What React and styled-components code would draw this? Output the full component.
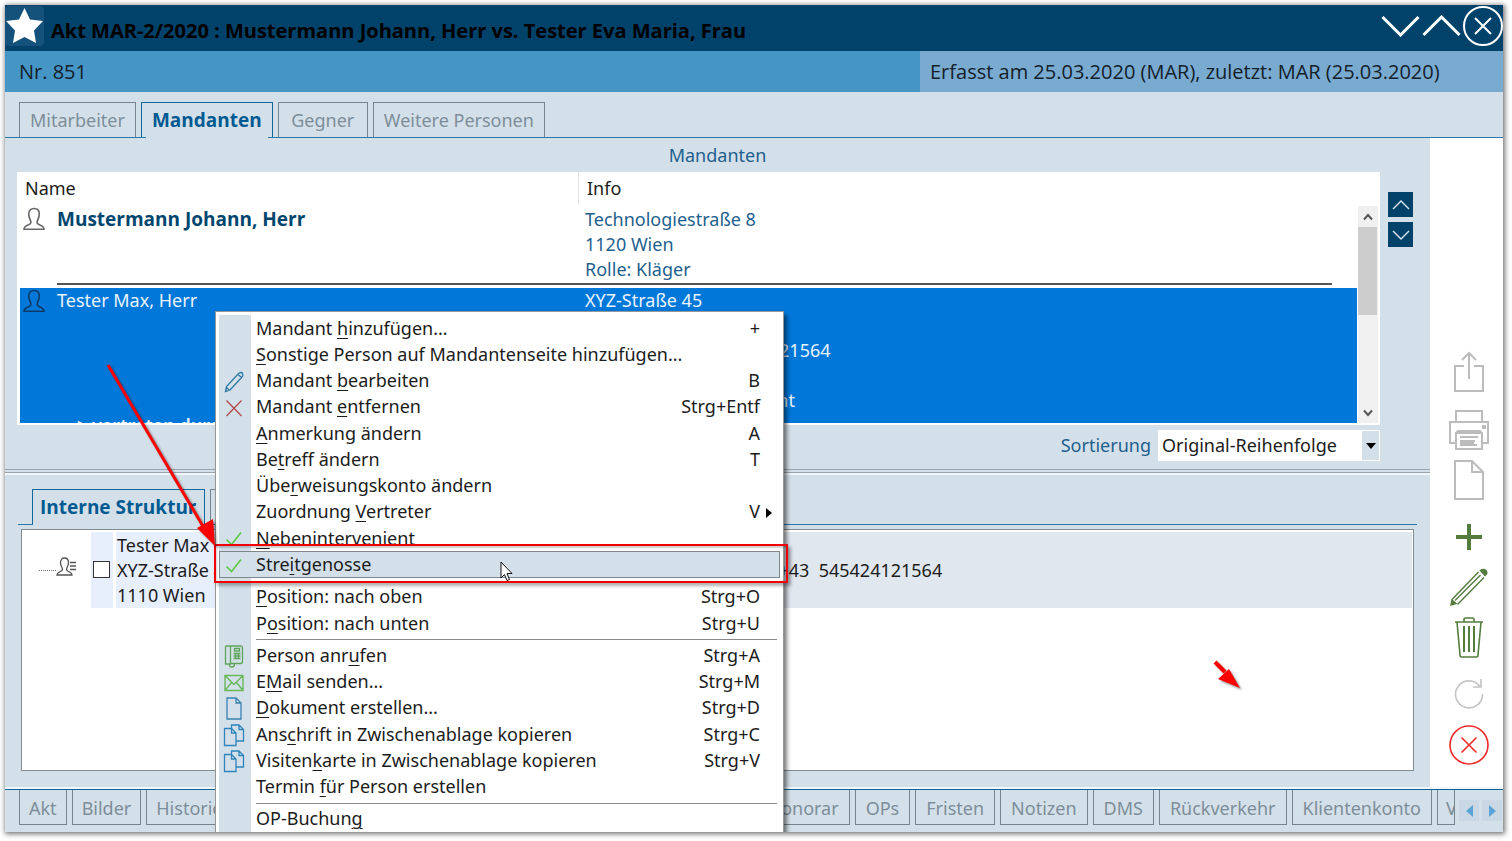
import React from 'react';
import styled, { createGlobalStyle, css } from 'styled-components';

const GlobalStyle = createGlobalStyle`
    * {
        box-sizing: border-box;
    }
    body {
        margin: 0;
        background: #fff;
        color: #1c1c1c;
        font-family: 'Noto Sans', 'Open Sans', sans-serif;
        font-size: 18px;
        line-height: 25px;
    }
    button, select, input {
        margin: 0;
        font: inherit;
        color: inherit;
    }
    button {
        padding: 0;
        border: 0;
        background: none;
    }
`;

const Page = styled.div`
    position: relative;
    display: flex;
    height: 100vh;
    padding: 5px 9px 9px 5px;
    overflow: hidden;
`;
const Window = styled.main`
    position: relative;
    display: flex;
    flex: 1;
    flex-direction: column;
    min-width: 0;
    background: #d4e0e9;
    box-shadow: 1px 1px 5px 1px rgba(0, 0, 0, 0.55);
    overflow: hidden;
`;

/* title bar */
const TitleBar = styled.header`
    display: flex;
    align-items: center;
    height: 46px;
    background: #004269;
`;
const StarButton = styled.button`
    display: flex;
    width: 39px;
    height: 40px;
    margin-right: 7px;
    margin-bottom: 4px;
    border-radius: 4px;
    background: #14527c;
`;
const Title = styled.h1`
    flex: 1;
    margin: 0;
    padding-top: 4px;
    color: #000;
    font-family: 'Open Sans', sans-serif;
    font-size: 20px;
    font-weight: 700;
    white-space: nowrap;
`;
const WindowButtons = styled.div`
    display: flex;
    align-items: center;
    gap: 2px;
    margin-bottom: 4px;

    button {
        display: flex;
    }
`;
const SubBar = styled.div`
    display: flex;
    align-items: center;
    justify-content: space-between;
    height: 41px;
    background: #4595c5;
    color: #14202a;
    font-family: 'Open Sans', sans-serif;
    font-size: 20px;

    > span {
        padding-left: 14px;
    }
`;
const SubInfo = styled.div`
    display: flex;
    align-items: center;
    width: 583px;
    height: 100%;
    padding-left: 10px;
    background: #79abd1;
`;

/* tabs */
const TabBar = styled.nav`
    display: flex;
    flex-shrink: 0;
    align-items: flex-end;
    gap: 5px;
    height: ${(props) => props.$height};
    padding-left: ${(props) => props.$indent};
    border-bottom: 1px solid #2c79a8;
`;
const Tab = styled.button`
    position: relative;
    flex-shrink: 0;
    min-width: ${(props) => props.$min || '0'};
    height: 35px;
    padding: 0 ${(props) => props.$pad || '10px'};
    border: 1px solid #74858f;
    border-bottom: 0;
    color: #7d8e9a;
    white-space: nowrap;

    ${(props) =>
        props.$active &&
        css`
            border-color: #14679b;
            color: #005a92;
            font-family: 'Open Sans', sans-serif;
            font-size: 19px;
            font-weight: 700;

            &::after {
                content: '';
                position: absolute;
                left: ${props.$open || '4px'};
                right: 4px;
                bottom: -1px;
                height: 1px;
                background: #d4e0e9;
            }
        `}
`;

/* content */
const Main = styled.div`
    display: flex;
    flex: 1;
    min-height: 0;
`;
const Content = styled.section`
    display: flex;
    flex: 1;
    flex-direction: column;
    min-width: 0;
`;
const PanelTitle = styled.h2`
    margin: 0;
    color: #1f5f8e;
    font-size: 18px;
    font-weight: 400;
    line-height: 34px;
    text-align: center;
`;
const ListRow = styled.div`
    display: flex;
    gap: 8px;
    padding: 0 17px 0 12px;
`;
const ListPanel = styled.div`
    display: flex;
    flex: 1;
    min-width: 0;
    height: 253px;
    padding: 0 2px 2px 3px;
    background: #fff;
`;
const ListView = styled.div`
    flex: 1;
    overflow: hidden;
`;
const PersonTable = styled.table`
    width: 100%;
    border-collapse: collapse;
    table-layout: fixed;
    color: #1f5f8e;

    th,
    td {
        padding: 0;
        font-weight: 400;
        text-align: left;
        vertical-align: top;
    }
`;
const HeadCell = styled.div`
    height: 32px;
    margin-bottom: 2px;
    padding-left: ${(props) => (props.$divider ? '8px' : '5px')};
    border-left: ${(props) => (props.$divider ? '1px solid #e2e2e2' : '0')};
    color: #1c1c1c;
    line-height: 32px;
`;
const PersonRow = styled.tr`
    height: ${(props) => (props.$selected ? '160px' : '82px')};
    background: ${(props) => (props.$selected ? '#0078d9' : '#fff')};
    color: ${(props) => (props.$selected ? '#e8f2fc' : 'inherit')};

    td > div {
        height: ${(props) => (props.$selected ? 'auto' : '79px')};
        padding-top: ${(props) => (props.$selected ? '0' : '1px')};
        border-bottom: ${(props) => (props.$selected ? '0' : '2px solid #555')};
    }
    td > svg {
        display: block;
        margin: 1px 0 0 3px;
    }
`;
const InfoCell = styled.div`
    padding-left: 7px;
    white-space: pre-line;
`;
const PersonName = styled.div`
    color: #00466f;
    font-family: 'Open Sans', sans-serif;
    font-size: 19px;
    font-weight: 700;
`;
const Represented = styled.p`
    margin: 100px 0 0 20px;
    color: #e8f2fc;
    font-weight: 600;
`;
const ScrollBar = styled.div`
    display: flex;
    flex-direction: column;
    width: 20px;
    margin: 34px 0 0 1px;
    background: #f0f0f0;

    button {
        height: 21px;
    }
    svg {
        display: block;
        margin: auto;
    }
`;
const ScrollThumb = styled.div`
    height: 88px;
    margin-right: 1px;
    background: #cdcdcd;
`;
const ScrollTrack = styled.div`
    flex: 1;
`;
const MoveButtons = styled.div`
    display: flex;
    flex-direction: column;
    gap: 5px;
    width: 25px;
    padding-top: 20px;

    button {
        display: flex;
        align-items: center;
        justify-content: center;
        height: 25px;
        background: #004269;
    }
`;
const SortRow = styled.div`
    display: flex;
    align-items: center;
    justify-content: flex-end;
    gap: 7px;
    padding: 5px 50px 8px 0;
    color: #1f5f8e;
`;
const SelectBox = styled.div`
    position: relative;
    width: 222px;
    height: 31px;

    select {
        width: 100%;
        height: 100%;
        padding: 0 0 0 4px;
        border: 0;
        appearance: none;
        background: #fff;
        color: #1c1c1c;
    }
    > span {
        position: absolute;
        top: 1px;
        right: 1px;
        bottom: 1px;
        display: flex;
        align-items: center;
        justify-content: center;
        width: 17px;
        background: #d4e0e9;
        pointer-events: none;
    }
`;
const Splitter = styled.div`
    height: 6px;
    border-top: 1px solid #99a4ad;
    border-bottom: 2px solid #f2f6f9;

    &::before {
        content: '';
        display: block;
        height: 2px;
        border-bottom: 1px solid #99a4ad;
    }
`;
const LowerPane = styled.div`
    display: flex;
    flex: 1;
    flex-direction: column;
    min-height: 0;
    padding: 0 13px 16px 13px;
`;
const Tree = styled.div`
    flex: 1;
    margin: 4px 3px 0 3px;
    padding: 2px 1px;
    border: 1px solid #828c93;
    background: #fff;
`;
const TreeRow = styled.div`
    display: flex;
    align-items: stretch;
    height: 76px;
`;
const TreeIcon = styled.div`
    display: flex;
    align-items: center;
    width: 68px;
    padding-left: 16px;

    > span {
        width: 17px;
        border-top: 1px dotted #777;
    }
    svg {
        margin-bottom: 6px;
    }
`;
const TreeCheck = styled.label`
    display: flex;
    align-items: center;
    justify-content: center;
    width: 22px;
    margin-right: 3px;
    padding-right: 1px;
    padding-bottom: 2px;
    background: #e7eefc;

    input {
        width: 17px;
        height: 17px;
        border: 1px solid #333;
        appearance: none;
        background: #fff;
    }
`;
const TreeText = styled.div`
    width: 484px;
    padding: 1px 0 0 1px;
    background: #e7eefc;
    white-space: pre-line;
`;
const TreeContact = styled.div`
    flex: 1;
    padding-left: 107px;
    background: #e0e7ef;
    line-height: 77px;
    white-space: pre;
`;

/* sidebar */
const SideBar = styled.aside`
    display: flex;
    flex-direction: column;
    align-items: center;
    width: 73px;
    padding-top: 213px;
    padding-left: 4px;
    background: #fff;
`;
const SideButton = styled.button`
    display: flex;
    margin-bottom: ${(props) => props.$gap || '0'};
    color: ${(props) => props.$color};
`;

/* footer */
const Footer = styled.footer`
    display: flex;
    height: 45px;
    border-top: 2px solid #f2f6f9;
`;
const FooterTabs = styled.nav`
    display: flex;
    flex: 1;
    align-items: flex-start;
    gap: 5px;
    min-width: 0;
    padding-left: 14px;
    border-top: 1px solid #0a6496;
    overflow: hidden;
`;
const FooterTab = styled(Tab)`
    flex: ${(props) => (props.$fill ? '1 1 0' : '0 0 auto')};
    width: ${(props) => props.$width || 'auto'};
    padding-top: 3px;
    border-top: 0;
    border-bottom: 1px solid #74858f;
    overflow: hidden;
`;
const FooterArrows = styled.div`
    display: flex;
    gap: 3px;
    width: 48px;
    padding: 10px 1px 11px 4px;
    border-top: 1px solid #0a6496;

    button {
        display: flex;
        flex: 1;
        align-items: center;
        justify-content: center;
        background: #c9d8e4;
    }
`;

/* context menu */
const Menu = styled.ul`
    position: absolute;
    top: 306px;
    bottom: 0;
    left: 210px;
    display: flex;
    flex-direction: column;
    width: 569px;
    margin: 0;
    padding: 3px 3px 0;
    border: 1px solid #979797;
    border-bottom: 0;
    background: #fff;
    box-shadow: 3px 4px 4px rgba(0, 0, 0, 0.5);
    list-style: none;

    &::before {
        content: '';
        position: absolute;
        top: 3px;
        bottom: 0;
        left: 3px;
        width: 32px;
        background: #d3e0ea;
    }
`;
const MenuRow = styled.li`
    position: relative;
    display: flex;
    flex: 1 1 0;
    min-height: 0;
`;
const MenuButton = styled.button`
    display: grid;
    grid-template-columns: 32px 1fr auto 20px;
    align-items: center;
    width: 100%;
    color: #1c1c1c;
    text-align: left;
    background: ${(props) => (props.$active ? '#d3e0ea' : 'none')};
    outline: ${(props) => (props.$active ? '1px solid #80878c' : 'none')};
    outline-offset: -1px;

    > svg {
        justify-self: center;
        margin: 2px 2px 0 0;
    }
    u {
        text-decoration-thickness: 1px;
        text-underline-offset: 3px;
    }
`;
const MenuLabel = styled.span`
    grid-column: 2;
    padding-left: 5px;
`;
const MenuLine = styled.li`
    height: 3px;
    margin: 3px 3px 0 37px;
    border-top: 1px solid #8a8a8a;
`;

/* annotations lying over the window */
const MarkBox = styled.div`
    position: absolute;
    top: 544px;
    left: 214px;
    width: 574px;
    height: 39px;
    border: 2px solid #f20000;
    box-shadow: 3px 3px 3px rgba(0, 0, 0, 0.3), inset 1px 2px 2px rgba(0, 0, 0, 0.2);
    pointer-events: none;
`;
const Overlay = styled.svg`
    position: absolute;
    top: ${(props) => props.$top};
    left: ${(props) => props.$left};
    filter: ${(props) => (props.$shadow ? 'drop-shadow(2px 2px 1px rgba(0, 0, 0, 0.4))' : 'none')};
    pointer-events: none;
`;

const Svg = ({ w, h, box, sw = 1, children, ...rest }) => (
    <svg width={w} height={h} viewBox={box || `0 0 ${w} ${h}`} fill="none" stroke="currentColor" strokeWidth={sw} aria-hidden="true" {...rest}>
        {children}
    </svg>
);

const PersonIcon = ({ color }) => (
    <Svg w={22} h={24} sw={1.6} color={color}>
        <path d="M8 15.5C8 13 5.7 11.5 5.7 7C5.7 3.2 8 1.5 11 1.5S16.3 3.2 16.3 7C16.3 11.5 14 13 14 15.5C14 18.5 21 17.5 21 22.2H1C1 17.5 8 18.5 8 15.5Z" />
    </Svg>
);
const ContactIcon = () => (
    <Svg w={22} h={20} sw={1.3} color="#555">
        <path d="M6.5 12.5C6.5 10.5 4.5 9 4.5 5.5C4.5 2.5 6.3 1 8.5 1S12.5 2.5 12.5 5.5C12.5 9 10.5 10.5 10.5 12.5C10.5 15 16 14.5 16 18H1C1 14.5 6.5 15 6.5 12.5Z" />
        <path d="M14 5.5H20M14 9H20M14 12.5H20" />
    </Svg>
);
const Check = () => (
    <Svg w={18} h={16} sw={1.6} color="#5fc845">
        <path d="M1.5 8.5L6.5 13.5L16 1.5" />
    </Svg>
);
const PencilSmall = () => (
    <Svg w={20} h={22} sw={1.3} color="#2f78a3">
        <path d="M1.5 20.5L2.5 15.5L14.5 2.5Q18 .5 18.5 2.5Q19.300 4 18 6L6 19L1.5 20.5ZM14 3.5L17.5 6.5M2.5 16.5L5 19" />
    </Svg>
);
const CrossSmall = () => (
    <Svg w={18} h={18} sw={1.3} color="#b5484c">
        <path d="M1.5 1.5L16.5 17M16.5 1.5L1.5 17" />
    </Svg>
);
const PhoneSmall = () => (
    <Svg w={20} h={23} sw={1.3} color="#5fa558">
        <path d="M2.5 1H6.5V19H1.5V2Q1.5 1 2.5 1ZM6.5 1H16.5Q18.5 1 18.5 3V16.5Q18.5 18.5 16.5 18.5H6.5M5.5 19Q5 22 8 22Q10.5 22 10.5 19M10.5 3.5H15.5V6H10.5ZM9.5 8.5H16.500M9.5 11H16.5M9.5 13.5H16.5M11.5 8V14M14.5 8V14" />
    </Svg>
);
const MailSmall = () => (
    <Svg w={20} h={18} sw={1.4} color="#6ab85c">
        <path d="M1 1.5H19V16.5H1ZM1 1.5L10 10.5L19 1.5M1 16.5L7.5 8.5M19 16.5L12.5 8.5" />
    </Svg>
);
const PageSmall = () => (
    <Svg w={16} h={23} sw={1.3} color="#3a82b0">
        <path d="M1 1H10L15 6V22H1ZM10 1V6H15" />
    </Svg>
);
const CopySmall = () => (
    <Svg w={22} h={23} sw={1.3} color="#2f84bc">
        <path d="M8.5 4V1H16L20.5 5.5V17H13.5M16 1V5.5H20.5M1.5 4.5H8.5L13 9V21.5H1.5ZM8.5 4.5V9H13" />
    </Svg>
);

const menuItems = [
    { pre: 'Mandant ', k: 'h', post: 'inzufügen...', short: '+' },
    { pre: '', k: 'S', post: 'onstige Person auf Mandantenseite hinzufügen...' },
    { pre: 'Mandant ', k: 'b', post: 'earbeiten', short: 'B', icon: <PencilSmall /> },
    { pre: 'Mandant ', k: 'e', post: 'ntfernen', short: 'Strg+Entf', icon: <CrossSmall /> },
    { pre: '', k: 'A', post: 'nmerkung ändern', short: 'A' },
    { pre: 'Be', k: 't', post: 'reff ändern', short: 'T' },
    { pre: 'Übe', k: 'r', post: 'weisungskonto ändern' },
    { pre: 'Zuordnung ', k: 'V', post: 'ertreter', short: 'V', sub: true },
    { pre: '', k: 'N', post: 'ebenintervenient', icon: <Check /> },
    { pre: 'Stre', k: 'i', post: 'tgenosse', icon: <Check />, active: true },
    { line: true },
    { pre: '', k: 'P', post: 'osition: nach oben', short: 'Strg+O' },
    { pre: 'P', k: 'o', post: 'sition: nach unten', short: 'Strg+U' },
    { line: true },
    { pre: 'Person anr', k: 'u', post: 'fen', short: 'Strg+A', icon: <PhoneSmall /> },
    { pre: 'E', k: 'M', post: 'ail senden...', short: 'Strg+M', icon: <MailSmall /> },
    { pre: '', k: 'D', post: 'okument erstellen...', short: 'Strg+D', icon: <PageSmall /> },
    { pre: 'Ans', k: 'c', post: 'hrift in Zwischenablage kopieren', short: 'Strg+C', icon: <CopySmall /> },
    { pre: 'Visiten', k: 'k', post: 'arte in Zwischenablage kopieren', short: 'Strg+V', icon: <CopySmall /> },
    { pre: 'Termin ', k: 'f', post: 'ür Person erstellen' },
    { line: true },
    { pre: 'OP-Buchun', k: 'g', post: '' },
];

const footerTabs = [
    { label: 'Akt', pad: '9px' },
    { label: 'Bilder', pad: '9px' },
    { label: 'Historie', pad: '9px' },
    { label: 'Personen', fill: true },
    { label: 'Honorar' },
    { label: 'OPs' },
    { label: 'Fristen' },
    { label: 'Notizen' },
    { label: 'DMS' },
    { label: 'Rückverkehr' },
    { label: 'Klientenkonto' },
    { label: 'V', pad: '8px', width: '18px' },
];

function ContextMenu() {
    return (
        <Menu>
            {menuItems.map((item, i) =>
                item.line ? (
                    <MenuLine key={i} />
                ) : (
                    <MenuRow key={i}>
                        <MenuButton type="button" $active={item.active}>
                            {item.icon}
                            <MenuLabel>
                                {item.pre}
                                <u>{item.k}</u>
                                {item.post}
                            </MenuLabel>
                            <span>{item.short}</span>
                            {item.sub && (
                                <Svg w={6} h={10} stroke="none">
                                    <path d="M0 0L6 5L0 10Z" fill="#000" />
                                </Svg>
                            )}
                        </MenuButton>
                    </MenuRow>
                )
            )}
        </Menu>
    );
}

function PersonList() {
    return (
        <ListRow>
            <ListPanel>
                <ListView>
                    <PersonTable>
                        <colgroup>
                            <col width="37" />
                            <col width="521" />
                            <col />
                            <col width="25" />
                        </colgroup>
                        <thead>
                            <tr>
                                <th colSpan={2}>
                                    <HeadCell>Name</HeadCell>
                                </th>
                                <th colSpan={2}>
                                    <HeadCell $divider>Info</HeadCell>
                                </th>
                            </tr>
                        </thead>
                        <tbody>
                            <PersonRow>
                                <td>
                                    <PersonIcon color="#666" />
                                </td>
                                <td>
                                    <PersonName>Mustermann Johann, Herr</PersonName>
                                </td>
                                <td>
                                    <InfoCell>{'Technologiestraße 8\n1120 Wien\nRolle: Kläger'}</InfoCell>
                                </td>
                                <td />
                            </PersonRow>
                            <PersonRow $selected>
                                <td>
                                    <PersonIcon color="#0b3a68" />
                                </td>
                                <td>
                                    <div>Tester Max, Herr</div>
                                    <Represented>&gt; vertreten durch</Represented>
                                </td>
                                <td>
                                    <InfoCell>{'XYZ-Straße 45\n1110 Wien\nTelefon: +43 1 545424121564\n\nRolle: Nebenintervenient'}</InfoCell>
                                </td>
                                <td />
                            </PersonRow>
                        </tbody>
                    </PersonTable>
                </ListView>
                <ScrollBar>
                    <button type="button" aria-label="Nach oben scrollen">
                        <Svg w={10} h={8} sw={2} color="#555">
                            <path d="M1 6.5L5 2L9 6.5" />
                        </Svg>
                    </button>
                    <ScrollThumb />
                    <ScrollTrack />
                    <button type="button" aria-label="Nach unten scrollen">
                        <Svg w={10} h={8} sw={2} color="#555">
                            <path d="M1 1.5L5 6L9 1.5" />
                        </Svg>
                    </button>
                </ScrollBar>
            </ListPanel>
            <MoveButtons>
                <button type="button" aria-label="Nach oben">
                    <Svg w={18} h={10} sw={1.4} color="#dbe8f2">
                        <path d="M1 9L9 1L17 9" />
                    </Svg>
                </button>
                <button type="button" aria-label="Nach unten">
                    <Svg w={18} h={10} sw={1.4} color="#dbe8f2">
                        <path d="M1 1L9 9L17 1" />
                    </Svg>
                </button>
            </MoveButtons>
        </ListRow>
    );
}

function Tools() {
    return (
        <SideBar>
            <SideButton type="button" $color="#bcbcbc" $gap="16px" aria-label="Exportieren">
                <Svg w={40} h={42} sw={2}>
                    <path d="M15 15H6V40H34V15H25M20 28V2.5M13 9L20 2L27 9" />
                </Svg>
            </SideButton>
            <SideButton type="button" $color="#bcbcbc" $gap="8px" aria-label="Drucken">
                <Svg w={40} h={42} sw={2}>
                    <path d="M7 13V2H33V13M7 34H1V13H39V34H33M7 24H33V40H7ZM7 24L9 22H31L33 24M11 28H29M11 32H26M11 36H28" />
                    <path d="M11 31H25V36H11ZM33 16H37V20H33Z" fill="currentColor" stroke="none" />
                </Svg>
            </SideButton>
            <SideButton type="button" $color="#bcbcbc" $gap="22px" aria-label="Neues Dokument">
                <Svg w={40} h={42} sw={2}>
                    <path d="M6 2H23L34 13V40H6ZM23 2V13H34" />
                </Svg>
            </SideButton>
            <SideButton type="button" $color="#547c3c" $gap="17px" aria-label="Hinzufügen">
                <Svg w={28} h={28} sw={4}>
                    <path d="M14 1V27M1 14H27" />
                </Svg>
            </SideButton>
            <SideButton type="button" $color="#547c3c" $gap="10px" aria-label="Bearbeiten">
                <Svg w={38} h={38} sw={1.4}>
                    <path d="M2 31.5L28.5 4M7.5 36.5L34 9.5M5 32.5L30.5 7" />
                    <path d="M30.5 2.5Q33 .5 35.5 2Q37.500 4 36.500 6L35 7.5ZM1 37L2 32L6 35.5Z" fill="currentColor" />
                </Svg>
            </SideButton>
            <SideButton type="button" $color="#547c3c" $gap="20px" aria-label="Löschen">
                <Svg w={30} h={42} sw={1.6}>
                    <path d="M1 6H29M10 5.5V3.5Q10 2 12 2H18Q20 2 20 3.5V5.5M3 6L6 39Q6 41 7.500 41H22.5Q24 41 24 39L27 6" />
                    <path d="M10 10V36M15 10V36M20 10V36" strokeWidth="2" />
                </Svg>
            </SideButton>
            <SideButton type="button" $color="#c4c4c4" $gap="15px" aria-label="Aktualisieren">
                <Svg w={32} h={32} sw={1.6}>
                    <path d="M29.5 16A13.5 13.5 0 1 1 27 8.5M28 1V9H20" />
                </Svg>
            </SideButton>
            <SideButton type="button" $color="#ee2b2b" aria-label="Abbrechen">
                <Svg w={40} h={40} sw={1.6}>
                    <circle cx="20" cy="20" r="19" />
                    <path d="M12.5 12.5L27.5 27.5M27.5 12.5L12.5 27.5" />
                </Svg>
            </SideButton>
        </SideBar>
    );
}

function App() {
    return (
        <Page>
            <GlobalStyle />
            <Window>
                <TitleBar>
                    <StarButton type="button" aria-label="Favorit">
                        <Svg w={39} h={40} stroke="none">
                            <path d="M19.5 2L25 13.5L38 15L29 24.5L31 37L19.5 31L8 37L10 24.5L1 15L14 13.5Z" fill="#fff" />
                        </Svg>
                    </StarButton>
                    <Title>Akt MAR-2/2020 : Mustermann Johann, Herr vs. Tester Eva Maria, Frau</Title>
                    <WindowButtons>
                        <button type="button" aria-label="Nächster Akt">
                            <Svg w={39} h={22} sw={3} color="#fff">
                                <path d="M1.5 2L19.5 20L37.5 2" />
                            </Svg>
                        </button>
                        <button type="button" aria-label="Voriger Akt">
                            <Svg w={39} h={22} sw={3} color="#fff">
                                <path d="M1.5 20L19.5 2L37.5 20" />
                            </Svg>
                        </button>
                        <button type="button" aria-label="Schließen">
                            <Svg w={40} h={40} sw={2} color="#fff">
                                <circle cx="20" cy="20" r="19" />
                                <path d="M12 12L28 28M28 12L12 28" />
                            </Svg>
                        </button>
                    </WindowButtons>
                </TitleBar>
                <SubBar>
                    <span>Nr. 851</span>
                    <SubInfo>Erfasst am 25.03.2020 (MAR), zuletzt: MAR (25.03.2020)</SubInfo>
                </SubBar>
                <TabBar $height="46px" $indent="14px">
                    <Tab type="button">Mitarbeiter</Tab>
                    <Tab type="button" $active>
                        Mandanten
                    </Tab>
                    <Tab type="button" $min="90px">
                        Gegner
                    </Tab>
                    <Tab type="button">Weitere Personen</Tab>
                </TabBar>
                <Main>
                    <Content>
                        <PanelTitle>Mandanten</PanelTitle>
                        <PersonList />
                        <SortRow>
                            <label htmlFor="sort">Sortierung</label>
                            <SelectBox>
                                <select id="sort" defaultValue="orig">
                                    <option value="orig">Original-Reihenfolge</option>
                                </select>
                                <span>
                                    <Svg w={10} h={6} stroke="none">
                                        <path d="M0 0H10L5 6Z" fill="#000" />
                                    </Svg>
                                </span>
                            </SelectBox>
                        </SortRow>
                        <Splitter />
                        <LowerPane>
                            <TabBar $height="50px" $indent="14px">
                                <Tab type="button" $active $open="0" $pad="7px">
                                    Interne Struktur
                                </Tab>
                                <Tab type="button">Adressen</Tab>
                            </TabBar>
                            <Tree>
                                <TreeRow>
                                    <TreeIcon>
                                        <span />
                                        <ContactIcon />
                                    </TreeIcon>
                                    <TreeCheck>
                                        <input type="checkbox" aria-label="Tester Max" />
                                    </TreeCheck>
                                    <TreeText>{'Tester Max\nXYZ-Straße 45\n1110 Wien'}</TreeText>
                                    <TreeContact>{'Telefon: +43  545424121564'}</TreeContact>
                                </TreeRow>
                            </Tree>
                        </LowerPane>
                    </Content>
                    <Tools />
                </Main>
                <Footer>
                    <FooterTabs>
                        {footerTabs.map((tab) => (
                            <FooterTab key={tab.label} type="button" $fill={tab.fill} $width={tab.width} $pad={tab.pad}>
                                {tab.label}
                            </FooterTab>
                        ))}
                    </FooterTabs>
                    <FooterArrows>
                        <button type="button" aria-label="Zurück">
                            <Svg w={7} h={12} stroke="none">
                                <path d="M7 0V12L0 6Z" fill="#5ba3d6" />
                            </Svg>
                        </button>
                        <button type="button" aria-label="Weiter">
                            <Svg w={7} h={12} stroke="none">
                                <path d="M0 0V12L7 6Z" fill="#5ba3d6" />
                            </Svg>
                        </button>
                    </FooterArrows>
                </Footer>
                <ContextMenu />
            </Window>
            <MarkBox />
            <Overlay $top="360px" $left="100px" $shadow width="120" height="190">
                <path d="M8 5L104 168" stroke="#fe0000" strokeWidth="3" />
                <path d="M115 186L97 168L113 159Z" fill="#fe0000" />
            </Overlay>
            <Overlay $top="656px" $left="1210px" $shadow width="34" height="36">
                <path d="M5 6L15 16" stroke="#fe0000" strokeWidth="4" />
                <path d="M30 32L8 23L19 13Z" fill="#fe0000" />
            </Overlay>
            <Overlay $top="561px" $left="500px" width="14" height="21">
                <path d="M1 1V17L4.5 13.5L7 19.5L9.5 18.5L7 12.5H12Z" fill="#fff" stroke="#111" strokeWidth="1" />
            </Overlay>
        </Page>
    );
}

export default App;
